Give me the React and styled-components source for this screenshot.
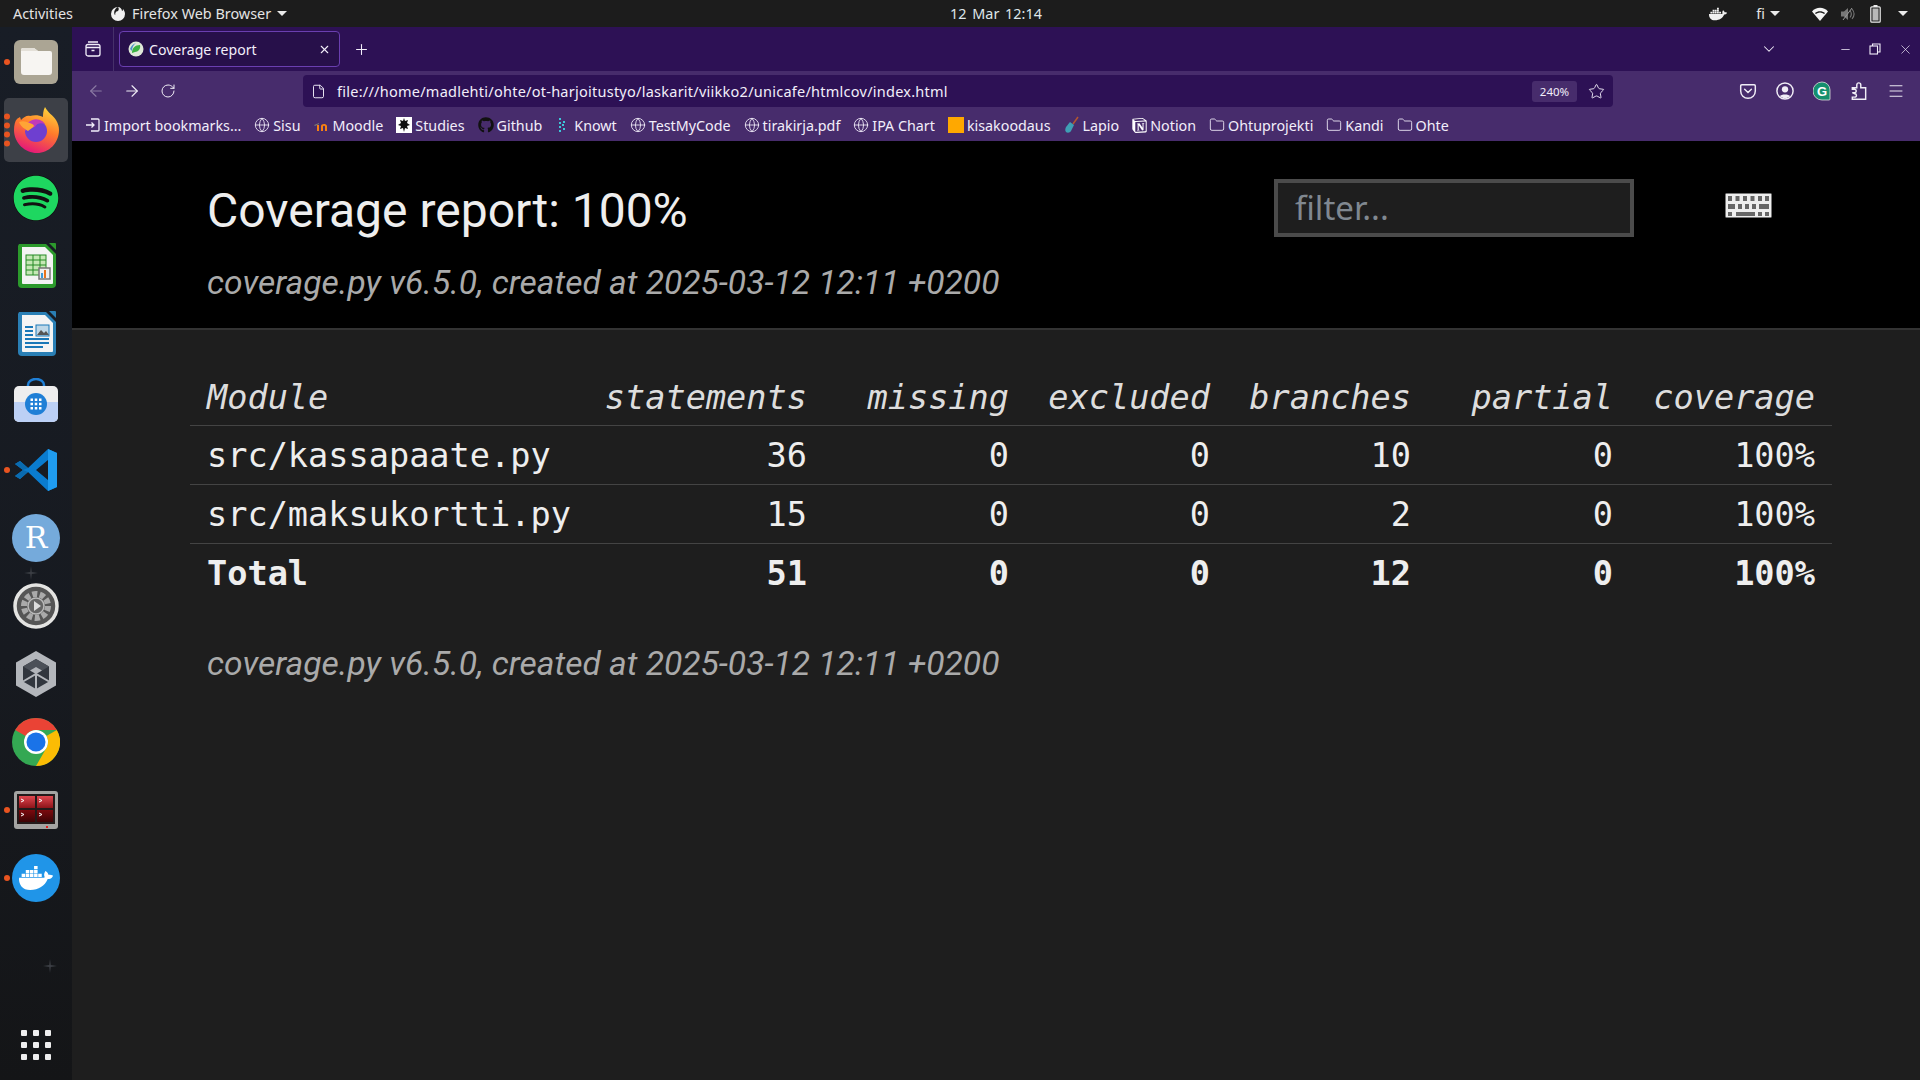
import styled, { createGlobalStyle } from 'styled-components';
import {
  ArrowLeft,
  ArrowRight,
  RotateCw,
  File,
  Star,
  Globe,
  Folder,
  Menu,
  Plus,
  X,
  ChevronDown,
  Minus,
} from 'lucide-react';
import { FaGithub, FaDocker, FaSpotify } from 'react-icons/fa';
import { SiNotion } from 'react-icons/si';

const GlobalStyle = createGlobalStyle`
  html, body {
    margin: 0;
    padding: 0;
    background: #1e1e1e;
    overflow: hidden;
  }
  * {
    box-sizing: border-box;
  }
`;

const Screen = styled.div`
  width: 1920px;
  height: 1080px;
  display: flex;
  flex-direction: column;
  font-family: 'Noto Sans', sans-serif;
  overflow: hidden;
`;

/* gnome top bar */
const TopBar = styled.div`
  height: 27px;
  flex: none;
  background: #1c1c1c;
  color: #e4e4e4;
  font-size: 14.4px;
  display: grid;
  grid-template-columns: 1fr auto 1fr;
  align-items: center;
  padding: 0 12px 0 13px;
`;

const TopLeft = styled.div`
  display: flex;
  align-items: center;
`;

const AppName = styled.div`
  display: flex;
  align-items: center;
  gap: 6px;
  margin-left: 37px;
`;

const Clock = styled.div`
  color: #dfe6ea;
  margin-left: 71px;
  word-spacing: 2px;
`;

const Tray = styled.div`
  display: flex;
  align-items: center;
  justify-content: flex-end;
`;

const TrayItem = styled.div`
  display: flex;
  align-items: center;
  gap: ${({ $gap }) => $gap || 0}px;
  margin-left: ${({ $left }) => $left || 0}px;
`;

const Caret = styled.span`
  display: inline-block;
  width: 0;
  height: 0;
  border-left: 5px solid transparent;
  border-right: 5px solid transparent;
  border-top: 5px solid #eaeaea;
`;

const Body = styled.div`
  flex: 1;
  display: flex;
  min-height: 0;
`;

/* ubuntu dock */
const Dock = styled.div`
  position: relative;
  width: 72px;
  flex: none;
  background: linear-gradient(180deg, #181d26 0%, #171a20 60%, #141517 100%);
  display: flex;
  flex-direction: column;
  padding-top: 1px;
`;

const Sparkle = styled.svg`
  position: absolute;
  left: ${({ $x }) => $x}px;
  top: ${({ $y }) => $y}px;
  width: 14px;
  height: 14px;
`;

const DockSlot = styled.div`
  position: relative;
  height: ${({ $h }) => $h || 68}px;
  display: flex;
  align-items: center;
  justify-content: center;
  margin-top: ${({ $top }) => $top || 0}px;
`;

const ActiveTile = styled.div`
  position: absolute;
  left: 4px;
  right: 4px;
  top: 2px;
  bottom: 2px;
  border-radius: 5px;
  background: #3d4047;
`;

const Dots = styled.div`
  position: absolute;
  left: 4px;
  top: 50%;
  transform: translateY(-50%);
  display: flex;
  flex-direction: column;
  gap: 3px;
`;

const Dot = styled.span`
  width: 6px;
  height: 6px;
  border-radius: 50%;
  background: #e95420;
`;

const DockIcon = styled.svg`
  position: relative;
  width: 48px;
  height: 48px;
  display: block;
`;

const AppsGrid = styled.div`
  display: grid;
  grid-template-columns: repeat(3, 6px);
  gap: 6px;
`;

const AppsDot = styled.span`
  width: 6px;
  height: 6px;
  border-radius: 1px;
  background: #eee;
`;

const Browser = styled.div`
  flex: 1;
  display: flex;
  flex-direction: column;
  min-width: 0;
`;

const TabBar = styled.div`
  height: 44px;
  flex: none;
  background: #2d1155;
  color: #f2eefa;
  display: flex;
  align-items: center;
`;

const TabsButton = styled.div`
  width: 42px;
  height: 100%;
  display: flex;
  align-items: center;
  justify-content: center;
  border-right: 1px solid #46306a;
`;

const Tab = styled.div`
  width: 221px;
  height: 36px;
  margin-left: 5px;
  border: 1px solid #6a3fb0;
  border-radius: 4px;
  background: #27104a;
  display: flex;
  align-items: center;
  padding: 0 8px;
  font-size: 14.1px;
`;

const TabTitle = styled.span`
  margin-left: 5px;
  flex: 1;
`;

const NewTab = styled.div`
  margin-left: 13px;
  display: flex;
`;

const WindowControls = styled.div`
  margin-left: auto;
  padding-right: 7px;
  display: flex;
  align-items: center;
`;

const WinBtn = styled.div`
  width: 16px;
  display: flex;
  justify-content: center;
  margin-left: ${({ $left }) => $left || 0}px;
`;

const NavBar = styled.div`
  height: 36px;
  flex: none;
  background: #472c6c;
  color: #f0edf6;
  display: flex;
  align-items: center;
  padding: 4px 0 0 6px;
`;

const NavBtn = styled.div`
  width: 36px;
  display: flex;
  justify-content: center;
  opacity: ${({ $dim }) => ($dim ? 0.4 : 1)};
`;

const UrlBar = styled.div`
  width: 1310px;
  height: 32px;
  margin-left: 117px;
  background: #2d1155;
  border-radius: 4px;
  display: flex;
  align-items: center;
  padding: 0 8px;
  font-size: 14.5px;
  color: #f2eefa;
`;

const UrlText = styled.span`
  margin-left: 11px;
  flex: 1;
  letter-spacing: 0.25px;
`;

const ZoomPill = styled.span`
  width: 45px;
  height: 21px;
  background: #472c6c;
  border-radius: 3px;
  font-size: 11.5px;
  display: flex;
  align-items: center;
  justify-content: center;
`;

const StarBtn = styled.span`
  display: flex;
  margin: 0 0 0 11px;
`;

const ToolIcons = styled.div`
  display: flex;
  align-items: center;
  margin-left: 116px;
`;

const ToolBtn = styled.div`
  width: ${({ $w }) => $w || 37}px;
  display: flex;
  justify-content: center;
`;

const BookmarkBar = styled.div`
  height: 34px;
  flex: none;
  background: #472c6c;
  color: #f2eefa;
  font-size: 14.3px;
  display: flex;
  align-items: center;
  padding: 2px 0 0 13px;
`;

const Bookmark = styled.div`
  display: flex;
  align-items: center;
  gap: ${({ $gap }) => $gap ?? 3}px;
  margin-right: ${({ $right }) => $right ?? 13}px;
  white-space: nowrap;
`;

const OrangeBox = styled.span`
  width: 16px;
  height: 16px;
  background: #ffa800;
`;

const Page = styled.div`
  flex: 1;
  background: #1e1e1e;
  min-height: 0;
`;

const ReportHeader = styled.header`
  height: 189px;
  background: #000;
  border-bottom: 2px solid #333;
  display: flex;
  padding: 0 0 0 135px;
`;

const HeaderText = styled.div`
  width: 1067px;
  flex: none;
`;

const Title = styled.h1`
  margin: 0;
  padding-top: 40px;
  font-family: Roboto, sans-serif;
  font-weight: 400;
  font-size: 48px;
  line-height: 60px;
  color: #eee;
`;

const Stamp = styled.p`
  margin: ${({ $top }) => $top}px 0 0 0;
  font-family: Roboto, sans-serif;
  font-style: italic;
  font-size: 33.6px;
  line-height: 44px;
  color: #aaa;
`;

const Filter = styled.div`
  width: 360px;
  height: 58px;
  margin-top: 38px;
  background: #1e1e1e;
  border: 4px solid #4b4b4b;
  color: #808890;
  font-size: 33px;
  line-height: 50px;
  padding-left: 17px;
`;

const KeyboardBtn = styled.svg`
  width: 47px;
  height: 25px;
  margin: 52px 0 0 91px;
`;

const TableWrap = styled.div`
  padding: 38px 0 0 118px;
`;

const Table = styled.table`
  width: 1642px;
  table-layout: fixed;
  border-collapse: collapse;
  font-family: 'DejaVu Sans Mono', monospace;
  font-size: 33.6px;
  color: #eee;
`;

const Cell = styled.td`
  height: 59px;
  padding: 2px 17px 0 0;
  text-align: right;
  font-weight: ${({ $bold }) => ($bold ? 700 : 400)};
  &:first-child {
    text-align: left;
    padding-left: 17px;
  }
`;

const HeadCell = styled.th`
  width: ${({ $w }) => $w}px;
  height: 57px;
  padding: 3px 17px 0 0;
  text-align: right;
  font-weight: 400;
  font-style: italic;
  color: #ddd;
  &:first-child {
    text-align: left;
    padding-left: 17px;
  }
`;

const Row = styled.tr`
  border-top: 1px solid #444;
`;

const HeadRow = styled.tr``;

const Footer = styled.div`
  padding-left: 135px;
`;

const columns = [
  ['Module', 400],
  ['statements', 234],
  ['missing', 202],
  ['excluded', 201],
  ['branches', 201],
  ['partial', 202],
  ['coverage', 202],
];

const rows = [
  ['src/kassapaate.py', 36, 0, 0, 10, 0, '100%'],
  ['src/maksukortti.py', 15, 0, 0, 2, 0, '100%'],
];

const totals = ['Total', 51, 0, 0, 12, 0, '100%'];

const bookmarks = [
  { label: 'Sisu', icon: 'globe' },
  { label: 'Moodle', icon: 'moodle' },
  { label: 'Studies', icon: 'studies' },
  { label: 'Github', icon: 'github' },
  { label: 'Knowt', icon: 'knowt' },
  { label: 'TestMyCode', icon: 'globe' },
  { label: 'tirakirja.pdf', icon: 'globe' },
  { label: 'IPA Chart', icon: 'globe' },
  { label: 'kisakoodaus', icon: 'orange' },
  { label: 'Lapio', icon: 'lapio' },
  { label: 'Notion', icon: 'notion' },
  { label: 'Ohtuprojekti', icon: 'folder' },
  { label: 'Kandi', icon: 'folder' },
  { label: 'Ohte', icon: 'folder' },
];

const BookmarkIcon = ({ icon }) => {
  switch (icon) {
    case 'globe':
      return <Globe size={16} strokeWidth={1.3} />;
    case 'folder':
      return <Folder size={16} strokeWidth={1.3} />;
    case 'github':
      return <FaGithub size={16} color="#111" />;
    case 'orange':
      return <OrangeBox />;
    case 'notion':
      return <SiNotion size={15} color="#fff" />;
    case 'moodle':
      return (
        <svg width="16" height="16" viewBox="0 0 16 16">
          <path d="M1 8l5-2v1L2 9z" fill="#777" />
          <path d="M4 14V8h2v6zM8 14V9c0-2 5-3 6 0v5h-2V9.500c0-1-2-1-2 0V14z" fill="#f98012" />
        </svg>
      );
    case 'studies':
      return (
        <svg width="16" height="16" viewBox="0 0 16 16">
          <rect width="16" height="16" fill="#fff" />
          <path d="M8 1l1 3 3-1-1 3 3 2-3 1 1 3-3-1-1 4-1-4-3 1 1-3-3-1 3-2-1-3 3 1z" fill="#111" />
        </svg>
      );
    case 'knowt':
      return (
        <svg width="16" height="16" viewBox="0 0 16 16" fill="#3cc6d8">
          <rect x="4" y="1" width="2" height="2" />
          <rect x="4" y="5" width="2" height="2" />
          <rect x="7" y="7" width="2" height="2" />
          <rect x="4" y="9" width="2" height="2" />
          <rect x="4" y="13" width="2" height="2" />
          <rect x="8" y="4" width="2" height="2" />
          <rect x="8" y="11" width="2" height="2" />
        </svg>
      );
    case 'lapio':
      return (
        <svg width="16" height="18" viewBox="0 0 16 18">
          <path d="M9 8l5-7" stroke="#b5562f" strokeWidth="1.500" fill="none" />
          <path d="M6 6l4 3-3 6c-1 2-4 2-5 1s-1-3 0-5z" fill="#3f9fb5" />
        </svg>
      );
    default:
      return null;
  }
};

const FilesIcon = () => (
  <DockIcon viewBox="0 0 48 48">
    <rect x="2" y="2" width="44" height="44" rx="6" fill="#aba594" />
    <path d="M9 12a2 2 0 0 1 2-2h11l4 3h12a2 2 0 0 1 2 2v19a3 3 0 0 1-3 3H12a3 3 0 0 1-3-3z" fill="#f7f5f2" />
    <path d="M9 12a2 2 0 0 1 2-2h11l4 3h-17z" fill="#e4e0d8" />
  </DockIcon>
);

const FirefoxIcon = () => (
  <DockIcon viewBox="0 0 48 48">
    <defs>
      <linearGradient id="ffBody" x1="0.7" y1="0" x2="0.3" y2="1">
        <stop offset="0" stopColor="#ffd43a" />
        <stop offset="0.45" stopColor="#ff7a2b" />
        <stop offset="1" stopColor="#e3127e" />
      </linearGradient>
    </defs>
    <path d="M2 24c0-5 1-9 3-11 1-1 3-2 3-2l1 3c3-3 6-5 9-4 4-1 9-1 13 1 0-3 0-6 2-10 3 6 8 8 11 13 2 3 3 7 3 10 0 13-10 23-22 23S2 37 2 24z" fill="url(#ffBody)" />
    <circle cx="24" cy="25" r="11" fill="#6e3fd0" />
    <path d="M13 25a11 11 0 0 1 20-7c-5-2-9 0-10 3-4 1-7 2-10 4z" fill="#c13ab8" />
    <path d="M7 16c4-2 9 0 13 2 3 1 2 3 0 4l-4 3c-3-2-7-4-9-9z" fill="#ffa436" />
  </DockIcon>
);

const SpotifyIcon = () => <FaSpotify size={46} color="#1ed760" style={{ background: '#111', borderRadius: '50%' }} />;

const CalcIcon = () => (
  <DockIcon viewBox="0 0 48 48">
    <path d="M7 2h27l10 10v30a4 4 0 0 1-4 4H10a4 4 0 0 1-4-4V4z" fill="#2c9a2c" />
    <path d="M10 5h23l8 8v28a1 1 0 0 1-1 1H11a1 1 0 0 1-1-1z" fill="#f4f4f4" />
    <path d="M37 1h6a1 1 0 0 1 1 1v6z" fill="#2c9a2c" />
    <rect x="14" y="13" width="20" height="20" fill="#c5e8b5" stroke="#258a25" />
    <path d="M14 18h20M14 23h20M14 28h20M21 13v20M28 13v20" stroke="#258a25" />
    <rect x="27" y="26" width="11" height="11" fill="#eee" stroke="#777" strokeWidth="1.500" />
    <rect x="29" y="31" width="2" height="5" fill="#3a9ad9" />
    <rect x="32" y="28" width="2" height="8" fill="#e8731a" />
  </DockIcon>
);

const WriterIcon = () => (
  <DockIcon viewBox="0 0 48 48">
    <path d="M7 2h27l10 10v30a4 4 0 0 1-4 4H10a4 4 0 0 1-4-4V4z" fill="#2a7fb5" />
    <path d="M10 5h23l8 8v28a1 1 0 0 1-1 1H11a1 1 0 0 1-1-1z" fill="#f4f4f4" />
    <path d="M37 1h6a1 1 0 0 1 1 1v6z" fill="#2a7fb5" />
    <path d="M13 17h8M13 21h8M13 25h8M13 29h24M13 33h24M13 37h18" stroke="#1a78b8" strokeWidth="2" />
    <rect x="24" y="15" width="13" height="11" fill="#bfd8e8" stroke="#1a78b8" />
    <path d="M25 25l4-5 3 3 2-2 3 4z" fill="#555" />
  </DockIcon>
);

const StoreIcon = () => (
  <DockIcon viewBox="0 0 48 48">
    <path d="M16 10V7a8 6 0 0 1 16 0v3" fill="none" stroke="#1f7fd6" strokeWidth="2.500" />
    <rect x="2" y="8" width="44" height="36" rx="5" fill="#eeeeee" />
    <path d="M2 24h44v15a5 5 0 0 1-5 5H7a5 5 0 0 1-5-5z" fill="#bcd0f5" />
    <circle cx="24" cy="26" r="11" fill="#1f7fd6" />
    <g fill="#fff">
      <rect x="18.500" y="20.500" width="2.500" height="2.500" />
      <rect x="22.750" y="20.500" width="2.500" height="2.500" />
      <rect x="27" y="20.500" width="2.500" height="2.500" />
      <rect x="18.500" y="24.750" width="2.500" height="2.500" />
      <rect x="22.750" y="24.750" width="2.500" height="2.500" />
      <rect x="27" y="24.750" width="2.500" height="2.500" />
      <rect x="18.500" y="29" width="2.500" height="2.500" />
      <rect x="22.750" y="29" width="2.500" height="2.500" />
      <rect x="27" y="29" width="2.500" height="2.500" />
    </g>
  </DockIcon>
);

const VsCodeIcon = () => (
  <DockIcon viewBox="0 0 48 48">
    <path fillRule="evenodd" d="M36 3L16 22 8 15 3 18l8 6-8 6 5 3 8-7 20 19 9-4V7zM36 14L24 24l12 10z" fill="#0a7ccf" />
    <path fillRule="evenodd" d="M36 3l9 4v34l-9 4V34L36 14z" fill="#1f9cf0" />
    <path d="M8 15l-5 3 8 6 5-2z" fill="#0a6bb0" />
    <path d="M3 30l5 3 8-7-5-2z" fill="#0a6bb0" />
  </DockIcon>
);

const RIcon = () => (
  <DockIcon viewBox="0 0 48 48">
    <circle cx="24" cy="24" r="24" fill="#75aadb" />
    <text x="24" y="34" textAnchor="middle" fontFamily="'DejaVu Serif', serif" fontSize="30" fill="#fff">
      R
    </text>
  </DockIcon>
);

const SettingsIcon = () => (
  <DockIcon viewBox="0 0 48 48">
    <circle cx="24" cy="24" r="21" fill="#555" stroke="#e4e4e2" strokeWidth="3.500" />
    <circle cx="24" cy="24" r="12" fill="none" stroke="#aaa" strokeWidth="6" strokeDasharray="5 2.500" />
    <circle cx="24" cy="24" r="8" fill="#666" stroke="#bbb" strokeWidth="1.500" />
    <path d="M22 19l7 5-7 5z" fill="#ddd" />
  </DockIcon>
);

const UnityIcon = () => (
  <DockIcon viewBox="0 0 48 48">
    <path d="M24 1l20 11.500v23L24 47 4 35.500v-23z" fill="#b3b6bb" />
    <path d="M24 9l13 7.500v15L24 39l-13-7.500v-15z" fill="#31363e" />
    <path d="M24 9l13 7.500-13 7.500-13-7.500z" fill="#4b5058" />
    <path d="M24 17l6 3.500-6 3.500-6-3.500z" fill="#b3b6bb" />
    <path d="M24 24v15M11 31.500l13-7.500 13 7.500" stroke="#b3b6bb" strokeWidth="2" fill="none" />
  </DockIcon>
);

const ChromeIcon = () => (
  <DockIcon viewBox="0 0 48 48">
    <circle cx="24" cy="24" r="24" fill="#34a853" />
    <path d="M24 0a24 24 0 0 1 20.800 12H24a12 12 0 0 0-10.400 6L3.200 12A24 24 0 0 1 24 0z" fill="#ea4335" />
    <path d="M44.800 12A24 24 0 0 1 24 48l10.400-18A12 12 0 0 0 34.400 18z" fill="#fbbc04" />
    <circle cx="24" cy="24" r="12" fill="#fff" />
    <circle cx="24" cy="24" r="9.500" fill="#1a73e8" />
  </DockIcon>
);

const TerminalIcon = () => (
  <DockIcon viewBox="0 0 48 48">
    <defs>
      <linearGradient id="termTop" x1="0" y1="0" x2="0" y2="1">
        <stop offset="0" stopColor="#e0474f" />
        <stop offset="1" stopColor="#8e141a" />
      </linearGradient>
      <linearGradient id="termBottom" x1="0" y1="0" x2="0" y2="1">
        <stop offset="0" stopColor="#7c0a0e" />
        <stop offset="1" stopColor="#3c0406" />
      </linearGradient>
    </defs>
    <rect x="2" y="5" width="44" height="38" rx="3" fill="#a4a4a2" />
    <rect x="5" y="8" width="38" height="30" fill="#231a1a" />
    <rect x="7" y="10" width="16" height="12" fill="url(#termTop)" />
    <rect x="25" y="10" width="16" height="12" fill="url(#termTop)" />
    <rect x="7" y="24" width="16" height="12" fill="url(#termBottom)" />
    <rect x="25" y="24" width="16" height="12" fill="url(#termBottom)" />
    <path d="M9 13l3 1.500-3 1.500M27 13l3 1.500-3 1.500M9 27l3 1.500-3 1.500M27 27l3 1.500-3 1.500" stroke="#fff" fill="none" />
    <rect x="34" y="40" width="2" height="2" fill="#e02020" />
  </DockIcon>
);

const DockerIcon = () => (
  <DockIcon viewBox="0 0 48 48">
    <circle cx="24" cy="24" r="24" fill="#2095e8" />
    <FaDocker x="7" y="7" size={34} color="#fff" />
  </DockIcon>
);

const dockApps = [
  { Icon: FilesIcon, dots: 1 },
  { Icon: FirefoxIcon, dots: 4, active: true },
  { Icon: SpotifyIcon },
  { Icon: CalcIcon },
  { Icon: WriterIcon },
  { Icon: StoreIcon },
  { Icon: VsCodeIcon, dots: 1 },
  { Icon: RIcon },
  { Icon: SettingsIcon },
  { Icon: UnityIcon },
  { Icon: ChromeIcon },
  { Icon: TerminalIcon, dots: 1 },
  { Icon: DockerIcon, dots: 1 },
];

const FirefoxViewIcon = () => (
  <svg width="16" height="16" viewBox="0 0 16 16" fill="none" stroke="#f2eefa" strokeWidth="1.300">
    <rect x="1" y="3.500" width="14" height="11.500" rx="2" />
    <path d="M3 1h10M1 6.500h14M6.500 9.500h3" />
  </svg>
);

const Favicon = () => (
  <svg width="16" height="16" viewBox="0 0 16 16">
    <circle cx="8" cy="8" r="7.500" fill="#dfe8d8" />
    <path d="M4 12c0-5 3-8 8-8 1 4-2 7-5 7z" fill="#3bb143" />
    <path d="M2 8c1-3 3-5 6-6-3 2-4 5-4 8z" fill="#4a90c8" />
  </svg>
);

const PocketIcon = () => (
  <svg width="18" height="18" viewBox="0 0 16 16" fill="none" stroke="#f0edf6" strokeWidth="1.300">
    <path d="M2.500 2.500h11a1 1 0 0 1 1 1V8a6.500 6.500 0 0 1-13 0V3.500a1 1 0 0 1 1-1z" />
    <path d="M5 6.500l3 2.800 3-2.800" strokeLinecap="round" />
  </svg>
);

const ProfileIcon = () => (
  <svg width="18" height="18" viewBox="0 0 16 16">
    <circle cx="8" cy="8" r="7.200" fill="none" stroke="#f0edf6" strokeWidth="1.300" />
    <circle cx="8" cy="6.500" r="2.800" fill="#f0edf6" />
    <path d="M3.500 12.500c1-2 8-2 9 0-2 2.500-7 2.500-9 0z" fill="#f0edf6" />
  </svg>
);

const GrammarlyIcon = () => (
  <svg width="18" height="20" viewBox="0 0 18 20">
    <path d="M9 1a8 8 0 0 1 8 8v9a1 1 0 0 1-1 1H9A8.500 8.500 0 0 1 9 1z" fill="#15906e" stroke="#ddd" strokeWidth="0.800" />
    <text x="9" y="14.500" textAnchor="middle" fontFamily="'Liberation Sans', sans-serif" fontWeight="700" fontSize="13" fill="#fff">
      G
    </text>
  </svg>
);

const PuzzleIcon = () => (
  <svg width="18" height="20" viewBox="0 0 16 18" fill="none" stroke="#f0edf6" strokeWidth="1.300">
    <path d="M2 10.500h2a1.500 1.500 0 0 0 0-3H2V6h4V3.500a1.800 1.800 0 0 1 3.600 0V6H14v10.500H2v-2h2.200a1.500 1.500 0 0 0 0-3z" />
  </svg>
);

const RestoreIcon = () => (
  <svg width="12" height="12" viewBox="0 0 12 12" fill="none" stroke="#f2eefa" strokeWidth="1.100">
    <rect x="1" y="3" width="7.500" height="8" />
    <path d="M3.500 3V1h7.500v8H8.500" />
  </svg>
);

const FirefoxGlyph = () => (
  <svg width="16" height="16" viewBox="0 0 16 16">
    <path d="M8 1a7 7 0 1 0 7 7c0-2-1-4-2-5 0 2-1 2-1 2 0-2-2-4-4-4 1 1 1 3 0 4a3 3 0 1 0 3 4c-1 1.500-4 2-6 0-1.500-2-1-6 3-8z" fill="#f0f0f0" />
  </svg>
);

const TrayDocker = () => <FaDocker size={18} color="#f0f0f0" />;

const WifiIcon = () => (
  <svg width="16" height="14" viewBox="0 0 16 14">
    <path d="M0 4.500C4-.5 12-.5 16 4.500L8 14z" fill="#f4f4f4" />
    <path d="M3 6c3-2.500 7-2.500 10 0l-.8 1C9.500 5 6.500 5 3.800 7z" fill="#1c1c1c" />
  </svg>
);

const MutedSpeaker = () => (
  <svg width="16" height="16" viewBox="0 0 16 16" fill="#777">
    <path d="M1 5.500h3l4-3.500v12l-4-3.500H1z" />
    <path d="M10 4.500c1.500 2 1.500 5 0 7M12 3c2.500 3 2.500 7 0 10" fill="none" stroke="#777" strokeWidth="1.100" />
    <path d="M3 14L12 2" stroke="#999" strokeWidth="1" />
  </svg>
);

const BatteryIcon = () => (
  <svg width="11" height="18" viewBox="0 0 11 18">
    <rect x="3.500" y="0" width="4" height="2" fill="#eee" />
    <rect x="0.800" y="1.800" width="9.400" height="15.400" rx="1" fill="none" stroke="#eee" strokeWidth="1.200" />
    <rect x="2.500" y="3.500" width="6" height="12" fill="#b8b8b8" />
  </svg>
);

const KeyboardIcon = () => (
  <KeyboardBtn viewBox="0 0 47 25">
    <rect x="0.500" y="0.500" width="46" height="24" rx="1" fill="#eee" stroke="#777" />
    <g fill="#666">
      {[3, 10.500, 18, 25.500, 33, 40].map((x) => (
        <rect key={x} x={x} y="3" width="4" height="5" />
      ))}
      <rect x="3" y="11" width="7" height="5" />
      {[13, 20, 27].map((x) => (
        <rect key={x} x={x} y="11" width="4" height="5" />
      ))}
      <rect x="34" y="11" width="10" height="5" />
      <rect x="3" y="19" width="4" height="4" />
      <rect x="11" y="19" width="19" height="4" />
      <rect x="33" y="19" width="4" height="4" />
      <rect x="40" y="19" width="4" height="4" />
    </g>
  </KeyboardBtn>
);

const DockSparkle = ({ x, y }) => (
  <Sparkle $x={x} $y={y} viewBox="0 0 14 14">
    <path d="M7 0l.8 6 6.200 1-6.200 1L7 14l-.8-6L0 7l6.200-1z" fill="#3b3e44" />
  </Sparkle>
);

const App = () => {
  return (
    <Screen>
      <GlobalStyle />
      <TopBar>
        <TopLeft>
          <span>Activities</span>
          <AppName>
            <FirefoxGlyph />
            <span>Firefox Web Browser</span>
            <Caret />
          </AppName>
        </TopLeft>
        <Clock>12 Mar 12:14</Clock>
        <Tray>
          <TrayItem>
            <TrayDocker />
          </TrayItem>
          <TrayItem $left={29} $gap={5}>
            <span>fi</span>
            <Caret />
          </TrayItem>
          <TrayItem $left={32}>
            <WifiIcon />
          </TrayItem>
          <TrayItem $left={12}>
            <MutedSpeaker />
          </TrayItem>
          <TrayItem $left={14}>
            <BatteryIcon />
          </TrayItem>
          <TrayItem $left={17}>
            <Caret />
          </TrayItem>
        </Tray>
      </TopBar>
      <Body>
        <Dock>
          <DockSparkle x={24} y={539} />
          <DockSparkle x={43} y={932} />
          {dockApps.map(({ Icon, dots, active }, i) => (
            <DockSlot key={i}>
              {active && <ActiveTile />}
              {dots && (
                <Dots>
                  {Array.from({ length: dots }).map((_, d) => (
                    <Dot key={d} />
                  ))}
                </Dots>
              )}
              <Icon />
            </DockSlot>
          ))}
          <DockSlot $top={115} $h={36}>
            <AppsGrid>
              {Array.from({ length: 9 }).map((_, i) => (
                <AppsDot key={i} />
              ))}
            </AppsGrid>
          </DockSlot>
        </Dock>
        <Browser>
          <TabBar>
            <TabsButton>
              <FirefoxViewIcon />
            </TabsButton>
            <Tab>
              <Favicon />
              <TabTitle>Coverage report</TabTitle>
              <X size={13} />
            </Tab>
            <NewTab>
              <Plus size={17} strokeWidth={1.500} />
            </NewTab>
            <WindowControls>
              <ChevronDown size={18} strokeWidth={1.400} />
              <WinBtn $left={59}>
                <Minus size={13} strokeWidth={1.400} />
              </WinBtn>
              <WinBtn $left={14}>
                <RestoreIcon />
              </WinBtn>
              <WinBtn $left={14}>
                <X size={15} strokeWidth={1.100} />
              </WinBtn>
            </WindowControls>
          </TabBar>
          <NavBar>
            <NavBtn $dim>
              <ArrowLeft size={18} strokeWidth={1.500} />
            </NavBtn>
            <NavBtn>
              <ArrowRight size={18} strokeWidth={1.500} />
            </NavBtn>
            <NavBtn>
              <RotateCw size={16} strokeWidth={1.500} />
            </NavBtn>
            <UrlBar>
              <File size={15} strokeWidth={1.500} />
              <UrlText>file:///home/madlehti/ohte/ot-harjoitustyo/laskarit/viikko2/unicafe/htmlcov/index.html</UrlText>
              <ZoomPill>240%</ZoomPill>
              <StarBtn>
                <Star size={17} strokeWidth={1.300} />
              </StarBtn>
            </UrlBar>
            <ToolIcons>
              <ToolBtn>
                <PocketIcon />
              </ToolBtn>
              <ToolBtn>
                <ProfileIcon />
              </ToolBtn>
              <ToolBtn>
                <GrammarlyIcon />
              </ToolBtn>
              <ToolBtn>
                <PuzzleIcon />
              </ToolBtn>
              <ToolBtn>
                <Menu size={18} strokeWidth={1.300} />
              </ToolBtn>
            </ToolIcons>
          </NavBar>
          <BookmarkBar>
            <Bookmark>
              <svg width="16" height="16" viewBox="0 0 16 16" fill="none" stroke="#f2eefa" strokeWidth="1.300">
                <path d="M6 2h7a1 1 0 0 1 1 1v10a1 1 0 0 1-1 1H6M1 8h8M6.500 5.500L9 8l-2.500 2.500" />
              </svg>
              <span>Import bookmarks…</span>
            </Bookmark>
            {bookmarks.map(({ label, icon }) => (
              <Bookmark key={label}>
                <BookmarkIcon icon={icon} />
                <span>{label}</span>
              </Bookmark>
            ))}
          </BookmarkBar>
          <Page>
            <ReportHeader>
              <HeaderText>
                <Title>Coverage report: 100%</Title>
                <Stamp $top={20}>coverage.py v6.5.0, created at 2025-03-12 12:11 +0200</Stamp>
              </HeaderText>
              <Filter>filter...</Filter>
              <KeyboardIcon />
            </ReportHeader>
            <TableWrap>
              <Table>
                <thead>
                  <HeadRow>
                    {columns.map(([name, w]) => (
                      <HeadCell key={name} $w={w}>
                        {name}
                      </HeadCell>
                    ))}
                  </HeadRow>
                </thead>
                <tbody>
                  {rows.map((row) => (
                    <Row key={row[0]}>
                      {row.map((value, i) => (
                        <Cell key={i}>{value}</Cell>
                      ))}
                    </Row>
                  ))}
                  <Row>
                    {totals.map((value, i) => (
                      <Cell key={i} $bold>
                        {value}
                      </Cell>
                    ))}
                  </Row>
                </tbody>
              </Table>
            </TableWrap>
            <Footer>
              <Stamp $top={40}>coverage.py v6.5.0, created at 2025-03-12 12:11 +0200</Stamp>
            </Footer>
          </Page>
        </Browser>
      </Body>
    </Screen>
  );
};

export default App;
